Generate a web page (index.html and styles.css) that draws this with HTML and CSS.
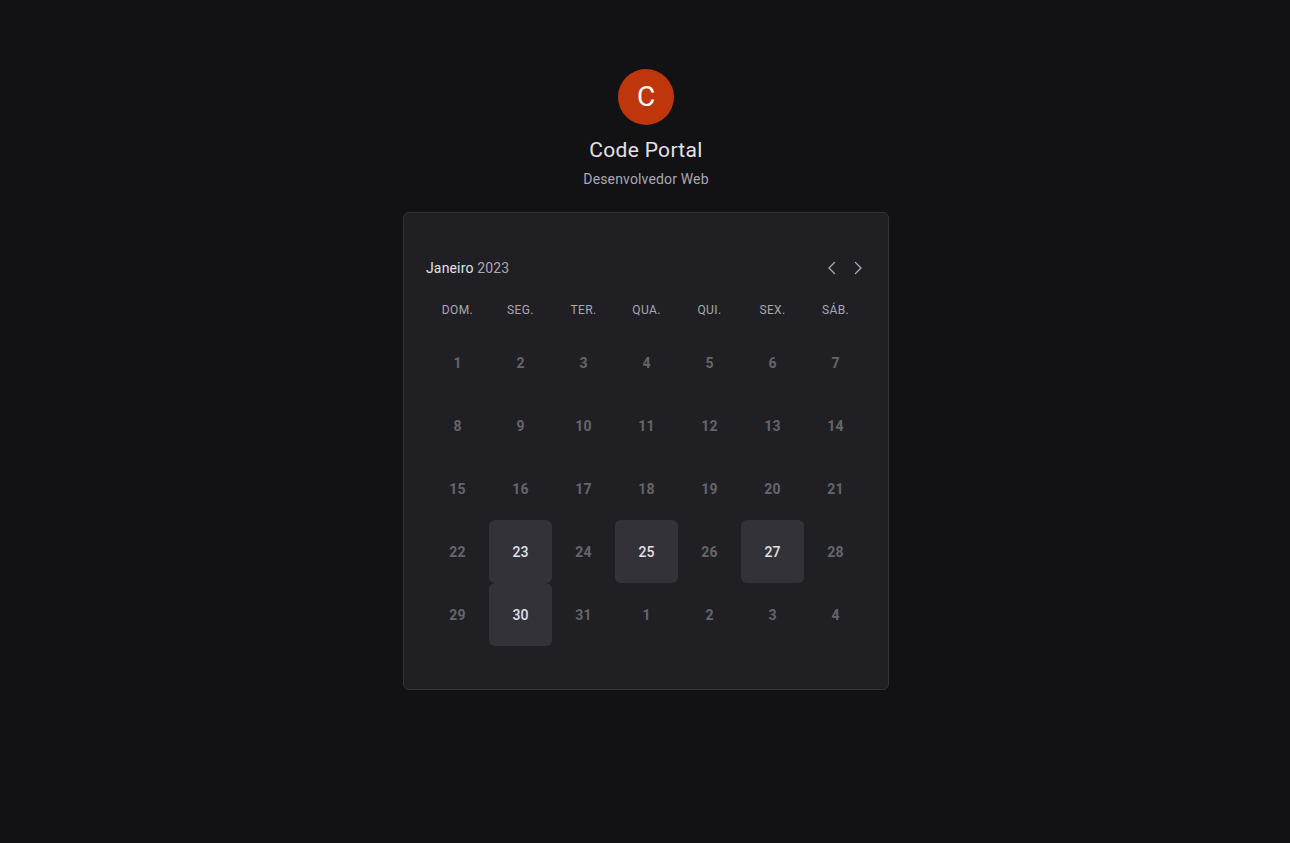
FILE: index.html
```html
<!DOCTYPE html>
<html lang="pt-BR">
<head>
<meta charset="utf-8">
<title>Code Portal</title>
<link rel="stylesheet" href="styles.css">
</head>
<body>
<main class="page">
  <div class="avatar">C</div>
  <h1 class="name">Code Portal</h1>
  <p class="role">Desenvolvedor Web</p>

  <section class="card">
    <header class="cal-header">
      <div class="month"><span class="month-name">Janeiro</span> <span class="year">2023</span></div>
      <div class="nav">
        <button class="nav-btn" aria-label="Mês anterior">
          <svg viewBox="0 0 16 16" width="16" height="16"><path d="M10.5 2.5 L5 8 L10.5 13.5" fill="none" stroke="currentColor" stroke-width="1.4" stroke-linecap="round" stroke-linejoin="round"/></svg>
        </button>
        <button class="nav-btn" aria-label="Próximo mês">
          <svg viewBox="0 0 16 16" width="16" height="16"><path d="M5.5 2.5 L11 8 L5.5 13.5" fill="none" stroke="currentColor" stroke-width="1.4" stroke-linecap="round" stroke-linejoin="round"/></svg>
        </button>
      </div>
    </header>

    <div class="weekdays">
      <span>DOM.</span><span>SEG.</span><span>TER.</span><span>QUA.</span><span>QUI.</span><span>SEX.</span><span>SÁB.</span>
    </div>

    <div class="days">
      <span class="day">1</span><span class="day">2</span><span class="day">3</span><span class="day">4</span><span class="day">5</span><span class="day">6</span><span class="day">7</span>
      <span class="day">8</span><span class="day">9</span><span class="day">10</span><span class="day">11</span><span class="day">12</span><span class="day">13</span><span class="day">14</span>
      <span class="day">15</span><span class="day">16</span><span class="day">17</span><span class="day">18</span><span class="day">19</span><span class="day">20</span><span class="day">21</span>
      <span class="day">22</span><span class="day available">23</span><span class="day">24</span><span class="day available">25</span><span class="day">26</span><span class="day available">27</span><span class="day">28</span>
      <span class="day">29</span><span class="day available">30</span><span class="day">31</span><span class="day">1</span><span class="day">2</span><span class="day">3</span><span class="day">4</span>
    </div>
  </section>
</main>
</body>
</html>
```

FILE: styles.css
```css
* {
  box-sizing: border-box;
}

html, body {
  margin: 0;
  padding: 0;
  background: #121214;
  height: 100%;
}

body {
  font-family: Roboto, "Liberation Sans", Arial, sans-serif;
  color: #e1e1e6;
  -webkit-font-smoothing: antialiased;
}

.page {
  display: flex;
  flex-direction: column;
  align-items: center;
  padding-top: 69px;
  padding-left: 2px;
}

.avatar {
  width: 56px;
  height: 56px;
  border-radius: 50%;
  background: #bf360c;
  color: #ffffff;
  display: flex;
  align-items: center;
  justify-content: center;
  font-size: 28px;
  font-weight: 400;
  line-height: 1;
}

.name {
  margin: 13px 0 0;
  font-size: 21px;
  font-weight: 400;
  line-height: 24px;
  letter-spacing: 0.3px;
  color: #e1e1e6;
}

.role {
  margin: 7px 0 0;
  font-size: 14px;
  line-height: 20px;
  letter-spacing: 0.15px;
  color: #a8a8b3;
}

.card {
  margin-top: 23px;
  width: 486px;
  background: #202024;
  border: 1px solid #323238;
  border-radius: 6px;
  padding: 40px 22px 43px;
}

.cal-header {
  height: 30px;
  display: flex;
  align-items: center;
  justify-content: space-between;
}

.month {
  font-size: 14px;
  line-height: 20px;
  letter-spacing: 0.15px;
}

.month-name {
  color: #e1e1e6;
}

.year {
  color: #a8a8b3;
}

.nav {
  display: flex;
  gap: 6px;
  margin-right: -2px;
}

.nav-btn {
  width: 20px;
  height: 24px;
  padding: 0;
  border: 0;
  background: transparent;
  color: #a8a8b3;
  display: flex;
  align-items: center;
  justify-content: center;
  cursor: pointer;
}

.weekdays {
  margin-top: 15px;
  height: 24px;
  display: grid;
  grid-template-columns: repeat(7, 63px);
  align-items: center;
  justify-items: center;
  font-size: 12px;
  letter-spacing: 0.4px;
  color: #a8a8b3;
}

.days {
  margin-top: 9px;
  display: grid;
  grid-template-columns: repeat(7, 63px);
  grid-auto-rows: 63px;
}

.day {
  display: flex;
  align-items: center;
  justify-content: center;
  font-size: 14px;
  font-weight: 700;
  letter-spacing: 0.15px;
  color: #65656c;
  border-radius: 6px;
}

.day.available {
  background: #323238;
  color: #e1e1e6;
  font-weight: 500;
}
```
